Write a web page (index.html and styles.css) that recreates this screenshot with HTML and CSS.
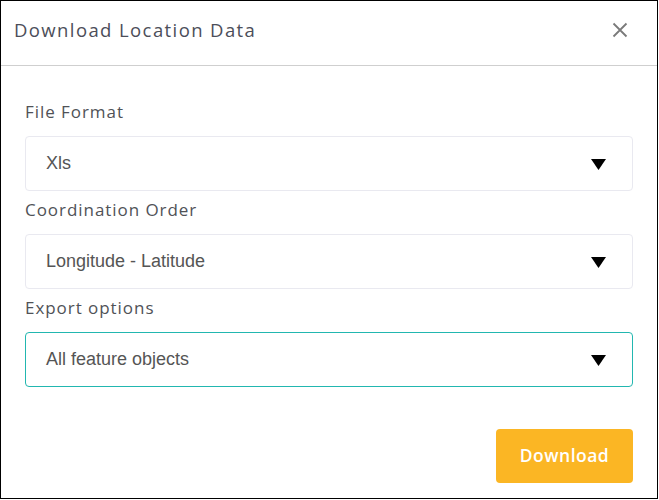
FILE: index.html
```html
<!DOCTYPE html>
<html lang="en">
<head>
<meta charset="utf-8">
<title>Download Location Data</title>
<link rel="stylesheet" href="styles.css">
</head>
<body>
<div class="dialog">
  <div class="dialog-header">
    <h1 class="dialog-title">Download Location Data</h1>
    <button class="close-btn" aria-label="Close">
      <svg width="16" height="16" viewBox="0 0 16 16"><path d="M1.5 1.5 L14.5 14.5 M14.5 1.5 L1.5 14.5" stroke="#7a7a7a" stroke-width="1.8" fill="none"/></svg>
    </button>
  </div>
  <div class="dialog-body">
    <div class="field">
      <label class="field-label">File Format</label>
      <div class="select"><span class="select-value">Xls</span><svg class="caret" width="15" height="11" viewBox="0 0 15 11"><polygon points="0,0 15,0 7.5,11" fill="#000"/></svg></div>
    </div>
    <div class="field">
      <label class="field-label">Coordination Order</label>
      <div class="select"><span class="select-value">Longitude - Latitude</span><svg class="caret" width="15" height="11" viewBox="0 0 15 11"><polygon points="0,0 15,0 7.5,11" fill="#000"/></svg></div>
    </div>
    <div class="field">
      <label class="field-label">Export options</label>
      <div class="select focused"><span class="select-value">All feature objects</span><svg class="caret" width="15" height="11" viewBox="0 0 15 11"><polygon points="0,0 15,0 7.5,11" fill="#000"/></svg></div>
    </div>
    <div class="actions">
      <button class="download-btn">Download</button>
    </div>
  </div>
</div>
</body>
</html>
```
FILE: styles.css
```css
* { box-sizing: border-box; }
html, body { margin: 0; padding: 0; background: #fff; }
.dialog {
  width: 658px;
  height: 499px;
  border: 1px solid #000;
  background: #fff;
  display: flex;
  flex-direction: column;
}
.dialog-header {
  height: 65px;
  border-bottom: 1px solid #cfcfcf;
  display: flex;
  align-items: center;
  justify-content: space-between;
  padding: 0 29px 7px 13px;
  flex-shrink: 0;
}
.dialog-title {
  margin: 0;
  font-family: "Open Sans", "DejaVu Sans", sans-serif;
  font-weight: 400;
  font-size: 18.5px;
  letter-spacing: 1.4px;
  color: #4c4e59;
  line-height: 24px;
}
.close-btn {
  border: 0;
  background: none;
  padding: 0;
  width: 16px;
  height: 16px;
  display: flex;
  cursor: pointer;
}
.dialog-body {
  padding: 34px 24px 0 24px;
  display: flex;
  flex-direction: column;
}
.field { display: flex; flex-direction: column; margin-bottom: 7px; }
.field-label {
  font-family: "Open Sans", "DejaVu Sans", sans-serif;
  font-size: 17px;
  letter-spacing: 0.95px;
  line-height: 24px;
  color: #505257;
  margin-bottom: 12px;
}
.select {
  height: 55px;
  border: 1px solid #e9e9f0;
  border-radius: 4px;
  display: flex;
  align-items: center;
  justify-content: space-between;
  padding: 0 26px 0 20px;
}
.select.focused { border-color: #22b7b0; }
.select-value {
  font-family: "Liberation Sans", Arial, sans-serif;
  font-size: 18px;
  color: #555;
}
.caret { display: block; margin-top: 1px; }
.actions {
  display: flex;
  justify-content: flex-end;
  margin-top: 35px;
}
.download-btn {
  width: 137px;
  height: 54px;
  border: 0;
  border-radius: 4px;
  background: #fbb624;
  color: #fff;
  font-family: "Open Sans", "DejaVu Sans", sans-serif;
  font-weight: 600;
  font-size: 17.5px;
  letter-spacing: 0.5px;
  padding: 0 0 3px 0;
  cursor: pointer;
}
```
